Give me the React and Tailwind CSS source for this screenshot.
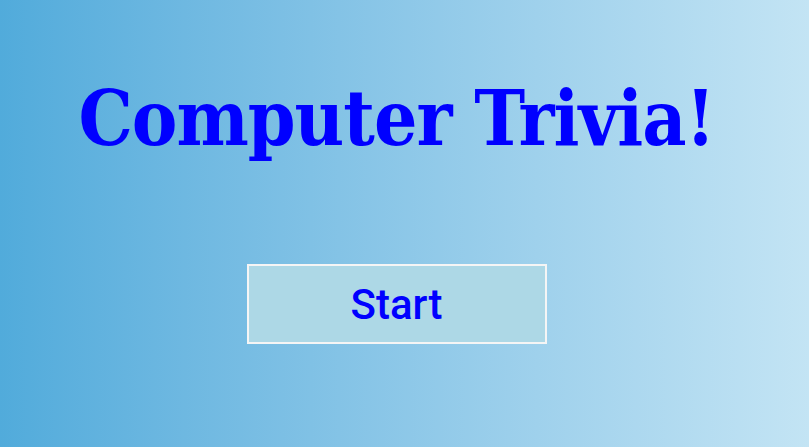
export default function App() {
  return (
    <div className="min-h-screen w-full bg-gradient-to-r from-[#51abdb] to-[#c3e4f4]">
      <div className="w-[793px] flex flex-col items-center pt-[81px]">
        <h1 className="text-[76px] leading-none text-[#0000ff] font-['DejaVu_Serif',serif] font-bold font-stretch-semi-condensed tracking-[-1px]">
          Computer Trivia!
        </h1>
        <button className="mt-[107px] w-[300px] h-[80px] bg-[#add8e6] border-2 border-[#f5f5f5] text-[#0000ff] text-[42px] font-medium font-['Roboto',sans-serif]">
          Start
        </button>
      </div>
    </div>
  );
}
